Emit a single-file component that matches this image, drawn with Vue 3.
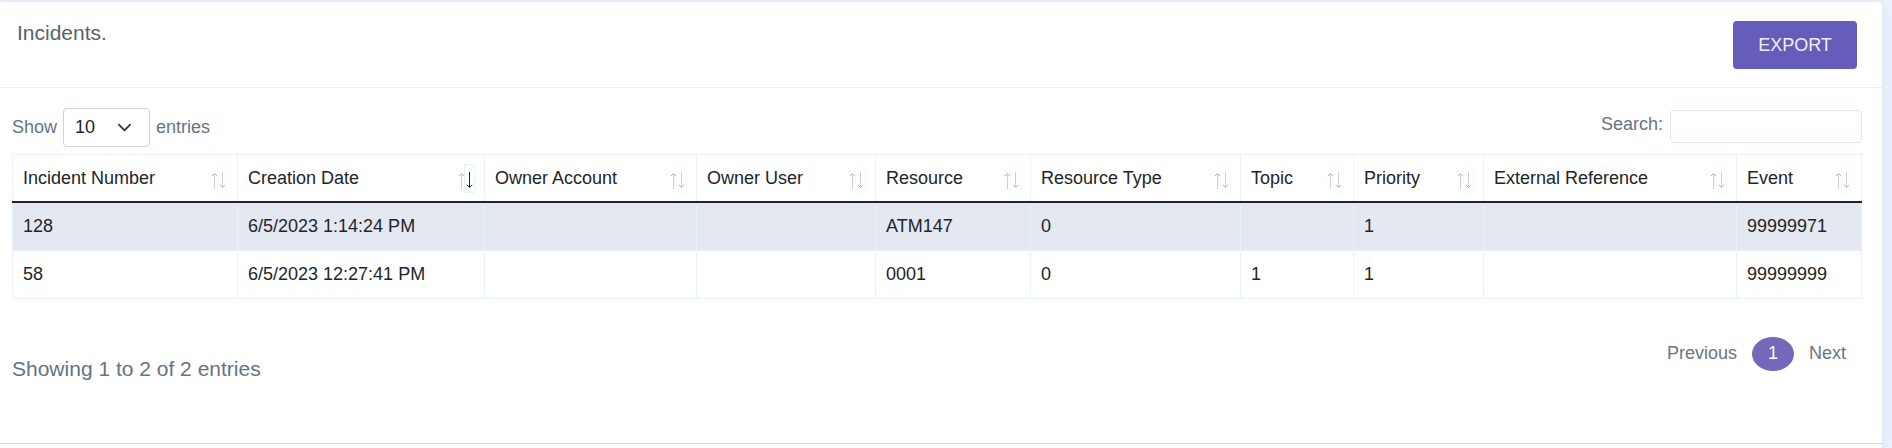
<script setup>
import { ref } from 'vue'

const columns = [
  { label: 'Incident Number', width: 226 },
  { label: 'Creation Date', width: 247, sorted: true },
  { label: 'Owner Account', width: 212 },
  { label: 'Owner User', width: 179 },
  { label: 'Resource', width: 155 },
  { label: 'Resource Type', width: 210 },
  { label: 'Topic', width: 113 },
  { label: 'Priority', width: 130 },
  { label: 'External Reference', width: 253 },
  { label: 'Event', width: 125 },
]

const rows = [
  ['128', '6/5/2023 1:14:24 PM', '', '', 'ATM147', '0', '', '1', '', '99999971'],
  ['58', '6/5/2023 12:27:41 PM', '', '', '0001', '0', '1', '1', '', '99999999'],
]

const pageSize = ref('10')
const query = ref('')
</script>

<template>
  <main class="page">
    <section class="card">
      <header class="card-header">
        <h1 class="title">Incidents.</h1>
        <button type="button" class="export">EXPORT</button>
      </header>

      <div class="card-body">
        <div class="toolbar">
          <div class="length">
            <label for="page-size">Show</label>
            <span class="select-wrap">
              <select id="page-size" v-model="pageSize">
                <option>10</option>
                <option>25</option>
                <option>50</option>
                <option>100</option>
              </select>
              <svg class="chevron" viewBox="0 0 16 16" aria-hidden="true">
                <path d="M2 5l6 6 6-6" fill="none" stroke="#343a40" stroke-width="2" stroke-linecap="round" stroke-linejoin="round" />
              </svg>
            </span>
            <span>entries</span>
          </div>
          <div class="search">
            <label for="search">Search:</label>
            <input id="search" v-model="query" type="search" />
          </div>
        </div>

        <table>
          <colgroup>
            <col v-for="c in columns" :key="c.label" :style="{ width: c.width + 'px' }" />
          </colgroup>
          <thead>
            <tr>
              <th v-for="c in columns" :key="c.label" scope="col" :aria-sort="c.sorted ? 'descending' : undefined">
                <button type="button" class="sort" :class="{ sorted: c.sorted }">
                  <span>{{ c.label }}</span>
                  <svg viewBox="0 0 17 29" aria-hidden="true">
                    <rect class="box" x="6.5" y="0.5" width="10" height="28" />
                    <g class="up">
                      <path class="shaft" d="M3.5 10V25" />
                      <path class="head" d="M0.8 12.2L3.5 9.5L6.2 12.2" />
                    </g>
                    <g class="down">
                      <path class="shaft" d="M11.5 8V23" />
                      <path class="head" d="M8.8 20.8L11.5 23.5L14.2 20.8" />
                    </g>
                  </svg>
                </button>
              </th>
            </tr>
          </thead>
          <tbody>
            <tr v-for="row in rows" :key="row[0]">
              <td v-for="(cell, i) in row" :key="i">{{ cell }}</td>
            </tr>
          </tbody>
        </table>

        <div class="table-footer">
          <p class="info">Showing 1 to 2 of 2 entries</p>
          <nav class="pagination" aria-label="Table pages">
            <a href="#">Previous</a>
            <a href="#" class="current" aria-current="page">1</a>
            <a href="#">Next</a>
          </nav>
        </div>
      </div>
    </section>
  </main>
</template>

<style>
body {
  margin: 0;
  background: #e8f1fd;
}
</style>

<style scoped>
* {
  box-sizing: border-box;
}

.page {
  display: flex;
  min-height: 100vh;
  padding: 2px 10px 0 0;
  font: 18px/27px "Liberation Sans", Arial, sans-serif;
  color: #212529;
  background: #e8f1fd;
}

.card {
  flex: 1;
  min-width: 0;
  background: #fff;
  border-radius: 0 5px 0 0;
  box-shadow: 0 2px 10px rgba(150, 175, 225, 0.2);
}

.card-header {
  display: flex;
  justify-content: space-between;
  align-items: flex-start;
  padding: 19px 25px 18px 17px;
  border-bottom: 1px solid #e7f0fb;
}

.title {
  margin: 0;
  font-size: 21px;
  line-height: 24px;
  font-weight: 400;
  color: #59636b;
}

.export {
  width: 124px;
  height: 48px;
  padding: 0;
  border: 0;
  border-radius: 4px;
  background: #655cbb;
  color: #f0eff8;
  font: inherit;
}

.card-body {
  padding: 20px 20px 62px 12px;
  border-bottom: 1px solid #d5d7da;
}

.toolbar {
  display: flex;
  justify-content: space-between;
  align-items: flex-start;
  margin-bottom: 7px;
  color: #647485;
}

.length {
  display: flex;
  align-items: center;
  gap: 6px;
}

.select-wrap {
  position: relative;
  display: flex;
}

select {
  width: 87px;
  height: 39px;
  padding: 0 11px;
  appearance: none;
  border: 1px solid #ced4da;
  border-radius: 4px;
  background: #fff;
  color: #212529;
  font: inherit;
}

.chevron {
  position: absolute;
  top: 12px;
  right: 18px;
  width: 15px;
  height: 15px;
  pointer-events: none;
}

.search {
  display: flex;
  align-items: center;
  gap: 7px;
  padding-top: 2px;
}

.search label {
  padding-bottom: 4px;
}

.search input {
  width: 192px;
  height: 33px;
  padding: 4px 8px;
  border: 1px solid #dce7f3;
  border-radius: 4px;
  background: #fff;
  font: inherit;
}

table {
  width: 100%;
  table-layout: fixed;
  border-collapse: separate;
  border-spacing: 0;
}

th,
td {
  padding: 10px;
  border: 0 solid #e7f2fd;
  border-width: 0 1px 1px 0;
  text-align: left;
  font-weight: 400;
}

td:first-child {
  border-left-width: 1px;
}

th {
  padding: 0 1px 0 0;
  border-width: 1px 0 2px;
  border-bottom-color: #212529;
  box-shadow: inset -1px 0 #e7f2fd;
}

th:first-child {
  padding-left: 1px;
  box-shadow: inset -1px 0 #e7f2fd, inset 1px 0 #e7f2fd;
}

tbody tr:nth-child(odd) {
  background: #e4e8f1;
}

.sort {
  display: flex;
  align-items: center;
  justify-content: space-between;
  width: 100%;
  height: 46px;
  padding: 0 9px 0 10px;
  border: 0;
  background: none;
  color: inherit;
  font: inherit;
  text-align: left;
  white-space: nowrap;
}

.sort svg {
  flex: none;
  width: 17px;
  height: 29px;
  fill: none;
}

.box {
  stroke: #f7fbff;
}

.shaft {
  stroke: #d0d0d0;
}

.head {
  stroke: #b4b4b4;
}

.sorted .box {
  stroke: #e7f2fd;
}

.sorted .down path {
  stroke: #212529;
}

.table-footer {
  display: flex;
  justify-content: space-between;
  align-items: flex-start;
  padding-top: 38px;
}

.info {
  margin: 0;
  padding-top: 20px;
  font-size: 21px;
  line-height: 24px;
  color: #647485;
}

.pagination {
  display: flex;
  align-items: center;
  gap: 15px;
  padding-right: 16px;
}

.pagination a {
  line-height: 32px;
  padding-bottom: 2px;
  color: #6c757d;
  text-decoration: none;
}

.pagination .current {
  width: 42px;
  border-radius: 50%;
  background: #7468bb;
  color: #fff;
  text-align: center;
}
</style>
